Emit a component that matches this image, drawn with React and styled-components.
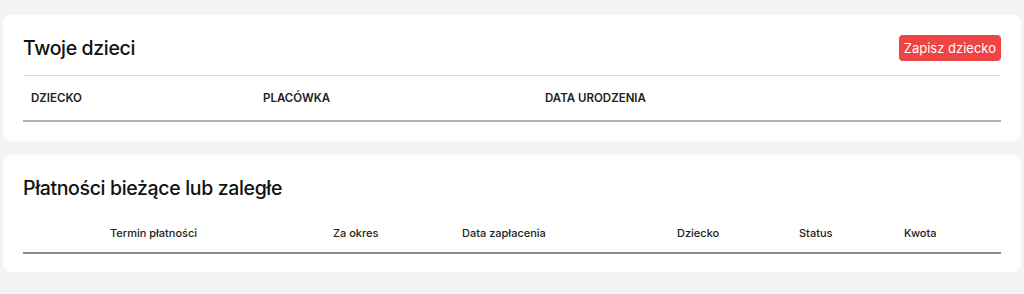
import React from "react";
import styled, { createGlobalStyle } from "styled-components";

const childColumns = ["DZIECKO", "PLACÓWKA", "DATA URODZENIA"];

const paymentColumns = [
	"Termin płatności",
	"Za okres",
	"Data zapłacenia",
	"Dziecko",
	"Status",
	"Kwota",
];

function App() {
	return (
		<>
			<GlobalStyle />
			<Page>
				<Card>
					<CardHeader>
						<Title>Twoje dzieci</Title>
						<AddButton>Zapisz dziecko</AddButton>
					</CardHeader>
					<ChildTable>
						<ChildRow>
							{childColumns.map((label) => (
								<ChildHead key={label}>{label}</ChildHead>
							))}
						</ChildRow>
					</ChildTable>
				</Card>

				<Card $bottom="18px">
					<CardHeader>
						<Title>Płatności bieżące lub zaległe</Title>
					</CardHeader>
					<PaymentTable>
						<PaymentRow>
							{paymentColumns.map((label, i) => (
								<PaymentHead key={label} $indent={i === 0}>
									{label}
								</PaymentHead>
							))}
						</PaymentRow>
					</PaymentTable>
				</Card>
			</Page>
		</>
	);
}

//STYLES

const GlobalStyle = createGlobalStyle`
	body {
		margin: 0;
		background: #f3f4f6;
		font-family: Inter, "Noto Sans", sans-serif;
		color: #111827;
	}
`;

const Page = styled.div`
	display: flex;
	flex-direction: column;
	gap: 14px;
	padding: 15px 3px;
`;

const Card = styled.div`
	background: #ffffff;
	border-radius: 8px;
	padding: 20px 20px ${(p) => p.$bottom || "19px"};
`;

const CardHeader = styled.div`
	display: flex;
	align-items: center;
	justify-content: space-between;
	height: 26px;
`;

const Title = styled.h2`
	margin: 0;
	font-size: 19.5px;
	font-weight: 500;
	letter-spacing: -0.35px;
	color: #111;
`;

const AddButton = styled.button`
	height: 26px;
	padding: 0 5px;
	border: none;
	border-radius: 4px;
	background: #ef4444;
	color: #ffffff;
	font-family: inherit;
	font-size: 13px;
`;

const ChildTable = styled.div`
	margin-top: 14px;
	border-top: 1px solid #d4dde8;
	border-bottom: 2px solid #b3b3b3;
`;

const ChildRow = styled.div`
	display: grid;
	grid-template-columns: 232px 282px 1fr;
	height: 44px;
	align-items: center;
`;

const ChildHead = styled.div`
	padding: 0 8px;
	font-size: 11.5px;
	font-weight: 600;
	color: #222;
`;

const PaymentTable = styled.div`
	margin-top: 9px;
	border-bottom: 2px solid #8a8a8a;
`;

const PaymentRow = styled.div`
	display: grid;
	grid-template-columns: 310px 129px 215px 122px 105px 1fr;
	height: 42px;
	padding-top: 4px;
	box-sizing: border-box;
	align-items: center;
`;

const PaymentHead = styled.div`
	padding-left: ${(p) => (p.$indent ? "87px" : "0")};
	font-size: 11px;
	font-weight: 500;
	color: #222;
`;

export default App;
